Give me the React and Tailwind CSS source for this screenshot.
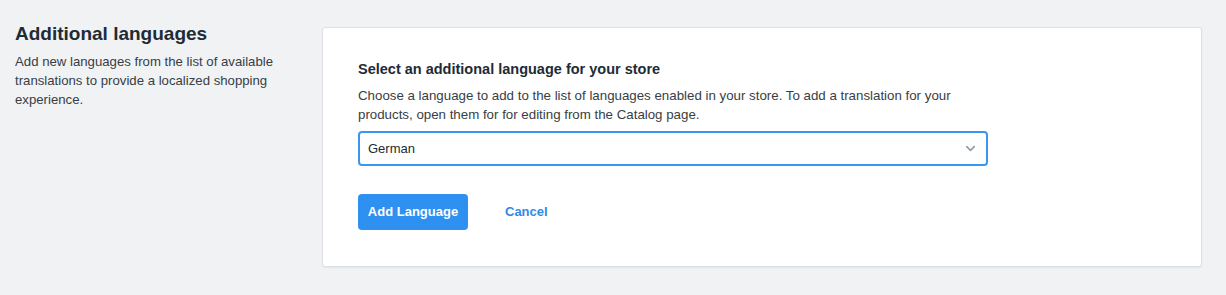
import { ChevronDown } from "lucide-react";

export default function App() {
  return (
    <div
      className="flex h-[295px] w-full bg-[#f1f2f4] text-[#212b36]"
      style={{ fontFamily: '"Liberation Sans", Arial, sans-serif' }}
    >
      {/* Section description */}
      <div className="w-[322px] shrink-0 pl-[15px] pr-[30px] pt-[22px]">
        <h2 className="text-[19px] font-bold leading-[24px]">Additional languages</h2>
        <p className="mt-[6px] text-[13.2px] leading-[19px] text-[#373e45]">
          Add new languages from the list of available translations to provide a localized shopping experience.
        </p>
      </div>

      {/* Card */}
      <div className="mt-[27px] mb-[28px] mr-[24px] flex-1 rounded-[3px] border border-[#dde0e4] bg-white px-[35px] pt-[31px] shadow-[0_1px_2px_rgba(0,0,0,0.06)]">
        <h3 className="text-[14.5px] font-bold leading-[20px]">Select an additional language for your store</h3>
        <p className="mt-[7px] w-[630px] text-[13.3px] leading-[19px] text-[#373e45]">
          Choose a language to add to the list of languages enabled in your store. To add a translation for your products, open them for for editing from the Catalog page.
        </p>
        <div className="mt-[7px] flex h-[35px] w-[630px] items-center justify-between rounded-[4px] border-2 border-[#3b96ee] pl-[8px] pr-[8px]">
          <span className="text-[13px]">German</span>
          <ChevronDown className="h-[15px] w-[15px] text-[#909aa4]" strokeWidth={2.5} />
        </div>
        <div className="mt-[28px] flex items-center gap-[37px]">
          <button className="h-[36px] w-[110px] rounded-[4px] bg-[#2e90f0] text-[13px] font-bold text-white">
            Add Language
          </button>
          <button className="text-[13px] font-semibold text-[#2e8ae6]">Cancel</button>
        </div>
      </div>
    </div>
  );
}
